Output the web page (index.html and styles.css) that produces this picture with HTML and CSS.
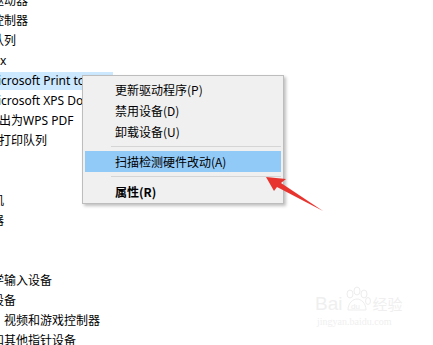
FILE: index.html
```html
<!DOCTYPE html>
<html lang="zh-CN">
<head>
    <meta charset="UTF-8">
    <title>设备管理器</title>
    <link rel="stylesheet" href="styles.css">
</head>
<body>
    <!-- 设备树（左侧被裁切） -->
    <div class="tree">
        <div class="row cat"><span>磁盘驱动器</span></div>
        <div class="row cat"><span>存储控制器</span></div>
        <div class="row cat"><span>打印队列</span></div>
        <div class="row child"><span>Fax</span></div>
        <div class="row child selected"><span>Microsoft Print to PDF</span></div>
        <div class="row child"><span>Microsoft XPS Document Writer</span></div>
        <div class="row child"><span>导出为WPS PDF</span></div>
        <div class="row child"><span>根打印队列</span></div>
        <div class="row cat"><span>电池</span></div>
        <div class="row cat"><span>固件</span></div>
        <div class="row cat"><span>计算机</span></div>
        <div class="row cat"><span>监视器</span></div>
        <div class="row cat"><span>键盘</span></div>
        <div class="row cat"><span>蓝牙</span></div>
        <div class="row cat"><span>人体学输入设备</span></div>
        <div class="row cat"><span>软件设备</span></div>
        <div class="row cat"><span>声音、视频和游戏控制器</span></div>
        <div class="row cat"><span>鼠标和其他指针设备</span></div>
    </div>

    <!-- 右键菜单 -->
    <div class="menu">
        <div class="item">更新驱动程序(P)</div>
        <div class="item">禁用设备(D)</div>
        <div class="item">卸载设备(U)</div>
        <div class="sep"></div>
        <div class="item active">扫描检测硬件改动(A)</div>
        <div class="sep"></div>
        <div class="item bold">属性(R)</div>
    </div>

    <!-- 红色箭头标注 -->
    <svg class="arrow" width="433" height="345" viewBox="0 0 433 345">
        <polygon points="266,177 286,179 281,183 323,211 277,187 274,191" fill="#e8342f"/>
    </svg>

    <!-- 百度经验水印 -->
    <div class="watermark">
        <div class="wm-top">
            <span class="wm-bai">Bai</span>
            <svg class="wm-paw" width="30" height="28" viewBox="0 0 30 28">
                <ellipse cx="8" cy="8" rx="3" ry="4" fill="none" stroke="#ededed"/>
                <ellipse cx="15" cy="5" rx="3" ry="4" fill="none" stroke="#ededed"/>
                <ellipse cx="22" cy="8" rx="3" ry="4" fill="none" stroke="#ededed"/>
                <ellipse cx="26" cy="15" rx="2.5" ry="3.5" fill="none" stroke="#ededed"/>
                <path d="M6 24 C6 17 11 13 15 13 C19 13 24 17 24 24 Z" fill="none" stroke="#ededed"/>
                <text x="9" y="23" font-size="8" fill="#ededed" font-family="Liberation Sans, sans-serif">du</text>
            </svg>
            <span class="wm-jy">经验</span>
        </div>
        <div class="wm-url">jingyan.baidu.com</div>
    </div>
</body>
</html>
```

FILE: styles.css
```css
body, html {
    margin: 0;
    height: 100%;
    background: #ffffff;
    overflow: hidden;
    font-family: "Noto Sans", "Noto Sans CJK SC", sans-serif;
    color: #000;
}

.tree {
    margin-top: -9px;
}

.row {
    height: 20px;
    white-space: nowrap;
    font-size: 12px;
}

.row span {
    display: inline-block;
    height: 18px;
    line-height: 18px;
    margin-top: 1px;
    padding: 0 3px;
}

.cat span {
    margin-left: -35px;
}

.child span {
    margin-left: -16px;
}

.selected span {
    background: #cce8ff;
}

.menu {
    position: absolute;
    left: 82px;
    top: 75px;
    width: 202px;
    box-sizing: border-box;
    padding: 3px 0 1px;
    background: #f0f0f0;
    border: 1px solid #bdbdbd;
    box-shadow: 2px 2px 3px rgba(0, 0, 0, 0.25);
    font-family: "Noto Sans CJK SC", sans-serif;
    font-size: 12px;
}

.item {
    height: 21px;
    line-height: 21px;
    margin: 0 2px;
    padding-left: 30px;
}

.item.active {
    background: #91c9f7;
}

.item.bold {
    font-weight: bold;
}

.sep {
    height: 1px;
    background: #d5d5d5;
    margin: 4px 2px 4px 28px;
}

.arrow {
    position: absolute;
    left: 0;
    top: 0;
}

.watermark {
    position: absolute;
    left: 315px;
    top: 286px;
    color: #efefef;
}

.wm-top {
    display: flex;
    align-items: flex-end;
}

.wm-bai {
    font-family: "Liberation Sans", sans-serif;
    font-size: 19px;
    line-height: 20px;
}

.wm-jy {
    font-size: 15px;
    line-height: 20px;
}

.wm-url {
    font-family: "Liberation Serif", serif;
    font-size: 10px;
    margin-top: 2px;
    margin-left: 2px;
}
```
